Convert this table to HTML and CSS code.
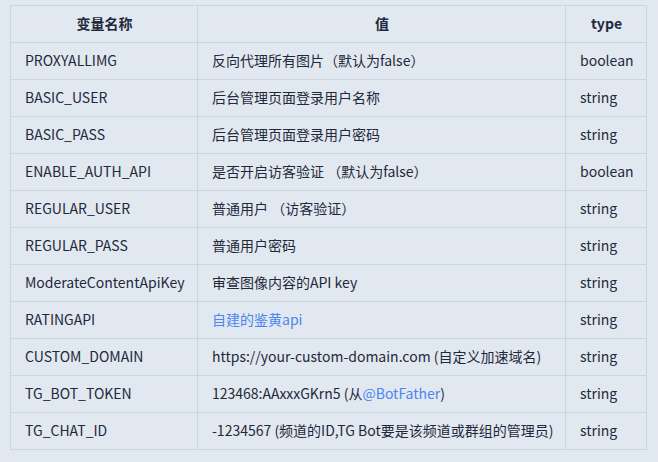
FILE: index.html
```html
<!DOCTYPE html>
<html lang="zh-CN">
<head>
<meta charset="utf-8">
<title>环境变量</title>
<link rel="stylesheet" href="styles.css">
</head>
<body>
<table class="vars">
  <colgroup>
    <col class="c-name">
    <col class="c-val">
    <col class="c-type">
  </colgroup>
  <thead>
    <tr><th>变量名称</th><th>值</th><th>type</th></tr>
  </thead>
  <tbody>
    <tr><td>PROXYALLIMG</td><td>反向代理所有图片（默认为false）</td><td>boolean</td></tr>
    <tr><td>BASIC_USER</td><td>后台管理页面登录用户名称</td><td>string</td></tr>
    <tr><td>BASIC_PASS</td><td>后台管理页面登录用户密码</td><td>string</td></tr>
    <tr><td>ENABLE_AUTH_API</td><td>是否开启访客验证 （默认为false）</td><td>boolean</td></tr>
    <tr><td>REGULAR_USER</td><td>普通用户 （访客验证）</td><td>string</td></tr>
    <tr><td>REGULAR_PASS</td><td>普通用户密码</td><td>string</td></tr>
    <tr><td>ModerateContentApiKey</td><td>审查图像内容的API key</td><td>string</td></tr>
    <tr><td>RATINGAPI</td><td><a class="link" href="#">自建的鉴黄api</a></td><td>string</td></tr>
    <tr><td>CUSTOM_DOMAIN</td><td>https://your-custom-domain.com (自定义加速域名)</td><td>string</td></tr>
    <tr><td>TG_BOT_TOKEN</td><td>123468:AAxxxGKrn5 (从<a class="link" href="#">@BotFather</a>)</td><td>string</td></tr>
    <tr><td>TG_CHAT_ID</td><td>-1234567 (频道的ID,TG Bot要是该频道或群组的管理员)</td><td>string</td></tr>
  </tbody>
</table>
</body>
</html>
```
FILE: styles.css
```css
html, body {
  background: #e2e8f0;
}
body {
  margin: 0;
  padding: 5px 0 0 10px;
  font-family: "Noto Sans CJK SC", "Noto Sans", sans-serif;
  font-size: 14px;
  color: #1e293b;
}
.vars {
  border-collapse: collapse;
  table-layout: fixed;
  width: 636px;
}
.c-name { width: 187px; }
.c-val { width: 368px; }
.c-type { width: 81px; }
.vars th,
.vars td {
  border: 1px solid #cbd5e1;
  padding: 7px 13px 9px 14px;
  line-height: 20px;
  text-align: left;
  white-space: nowrap;
  overflow: hidden;
}
.vars th {
  text-align: center;
  font-weight: 700;
}
.link {
  color: #4a86f0;
  text-decoration: none;
}
```
